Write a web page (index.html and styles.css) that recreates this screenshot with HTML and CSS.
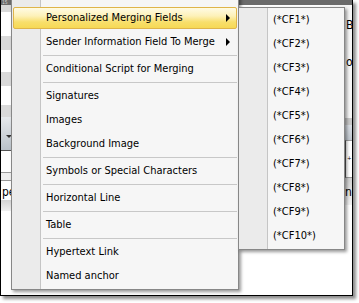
FILE: index.html
```html
<!DOCTYPE html>
<html>
<head>
<meta charset="utf-8">
<link rel="stylesheet" href="styles.css">
</head>
<body>
<div class="frame">
  <div class="bg">
    <div class="strip strip-left">
      <div class="r dark"><span class="num">15</span></div>
      <div class="r g h7"></div>
      <div class="r w h24"></div>
      <div class="r g h14"></div>
      <div class="r w h22"></div>
      <div class="r g h14"></div>
      <div class="r w h19"></div>
      <div class="r g h12"></div>
      <div class="r combo"><span class="caret"></span></div>
      <div class="r line-dark"></div>
      <div class="r w h21"></div>
      <div class="r line-mid"></div>
      <div class="r lg h7"></div>
      <div class="r line-mid"></div>
      <div class="r w h19 txt">pe</div>
      <div class="r fade h11"></div>
      <div class="r w fill"></div>
    </div>
    <div class="mid"></div>
    <div class="strip strip-right">
      <div class="r dark"></div>
      <div class="r w2 h113 rtxt"><span class="l1">B</span><span class="l2">o</span></div>
      <div class="r g2 h7"></div>
      <div class="r combo2 h15"></div>
      <div class="r box"><span>+</span></div>
      <div class="r fade2 h27 rtxt2">n</div>
      <div class="r w fill"></div>
    </div>
  </div>

  <div class="menu main">
    <div class="item active"><span>Personalized Merging Fields</span><i class="arrow"></i></div>
    <div class="item"><span>Sender Information Field To Merge</span><i class="arrow"></i></div>
    <div class="sep"></div>
    <div class="item"><span>Conditional Script for Merging</span></div>
    <div class="sep"></div>
    <div class="item"><span>Signatures</span></div>
    <div class="item"><span>Images</span></div>
    <div class="item"><span>Background Image</span></div>
    <div class="sep"></div>
    <div class="item"><span>Symbols or Special Characters</span></div>
    <div class="sep"></div>
    <div class="item"><span>Horizontal Line</span></div>
    <div class="sep"></div>
    <div class="item"><span>Table</span></div>
    <div class="sep"></div>
    <div class="item"><span>Hypertext Link</span></div>
    <div class="item"><span>Named anchor</span></div>
  </div>

  <div class="menu sub">
    <div class="item"><span>(*CF1*)</span></div>
    <div class="item"><span>(*CF2*)</span></div>
    <div class="item"><span>(*CF3*)</span></div>
    <div class="item"><span>(*CF4*)</span></div>
    <div class="item"><span>(*CF5*)</span></div>
    <div class="item"><span>(*CF6*)</span></div>
    <div class="item"><span>(*CF7*)</span></div>
    <div class="item"><span>(*CF8*)</span></div>
    <div class="item"><span>(*CF9*)</span></div>
    <div class="item"><span>(*CF10*)</span></div>
  </div>
</div>
</body>
</html>
```
FILE: styles.css
```css
html, body {
  margin: 0;
  padding: 0;
  background: #ffffff;
}
body {
  width: 359px;
  height: 303px;
  overflow: hidden;
  font-family: "DejaVu Sans Condensed", "DejaVu Sans", sans-serif;
  font-size: 11px;
  color: #000;
}
.frame {
  position: relative;
  box-sizing: border-box;
  width: 353px;
  height: 296px;
  border-left: 1px solid #000;
  border-right: 1px solid #000;
  border-bottom: 1px solid #000;
  box-shadow: 3px 3px 3px rgba(0, 0, 0, 0.45);
  overflow: hidden;
  background: #fff;
}
.bg {
  display: flex;
  height: 100%;
}
.strip {
  display: flex;
  flex-direction: column;
  width: 22px;
}
.mid {
  flex: 1;
  display: flex;
  flex-direction: column;
  background: linear-gradient(#6b6b6b 0 5px, #fff 5px);
}
.r { flex: none; position: relative; overflow: hidden; }
.dark { height: 5px; background: #6b6b6b; }
.num {
  display: block;
  font-size: 5px;
  line-height: 5px;
  color: #d8d8d8;
  padding-left: 1px;
}
.g { background: #d9d9d9; }
.g2 { background: #c8c8c8; }
.lg { background: #eeeeee; }
.w { background: #ffffff; }
.w2 { background: #f6f6f6; }
.h7 { height: 7px; }
.h11 { height: 11px; }
.h12 { height: 12px; }
.h14 { height: 14px; }
.h15 { height: 15px; }
.h19 { height: 19px; }
.h21 { height: 21px; }
.h22 { height: 22px; }
.h24 { height: 24px; }
.h27 { height: 27px; }
.h113 { height: 113px; }
.fill { flex: 1; }
.combo {
  height: 33px;
  background: linear-gradient(#e6e9ec, #b9c1c9);
  display: flex;
  align-items: center;
  padding-left: 5px;
  padding-top: 6px;
  box-sizing: border-box;
}
.caret {
  width: 0;
  height: 0;
  border-left: 3px solid transparent;
  border-right: 3px solid transparent;
  border-top: 3px solid #333;
}
.line-dark { height: 1px; background: #555; }
.line-mid { height: 1px; background: #999; }
.txt {
  font-family: "DejaVu Sans Condensed", sans-serif;
  font-size: 12px;
  line-height: 22px;
  padding-left: 1px;
}
.fade { background: linear-gradient(#d4d4d4, #f0f0f0); }
.rtxt {
  display: flex;
  flex-direction: column;
  padding-left: 16px;
  font-size: 12px;
  line-height: 14px;
}
.rtxt .l1 { margin-top: 13px; }
.rtxt .l2 { margin-top: 23px; }
.combo2 { background: linear-gradient(#d8dde3, #bfc6ce); }
.box {
  height: 38px;
  background: #fff;
  border-left: 1px solid #555;
  border-top: 1px solid #999;
  border-bottom: 1px solid #999;
  box-sizing: border-box;
  margin-left: 15px;
  padding-left: 1px;
  font-size: 6px;
  line-height: 34px;
}
.fade2 {
  background: linear-gradient(#d0d0d0, #f2f2f2);
  padding-left: 15px;
  font-size: 12px;
  line-height: 28px;
}

/* menus */
.menu {
  position: absolute;
  box-sizing: border-box;
  border: 1px solid #878787;
  background: linear-gradient(to right, #ebebeb 0 28px, #c5c5c5 28px 29px, #f6f6f6 29px);
  box-shadow: 2px 2px 3px rgba(0, 0, 0, 0.4);
  display: flex;
  flex-direction: column;
}
.main {
  left: 10px;
  top: -10px;
  width: 228px;
  padding: 15px 0 1px 0;
}
.sub {
  left: 237px;
  top: 7px;
  width: 107px;
  padding: 0 0 1px 0;
}
.item {
  position: relative;
  height: 24px;
  line-height: 24px;
  padding-left: 34px;
  padding-right: 8px;
  display: flex;
  align-items: center;
  justify-content: space-between;
  white-space: nowrap;
}
.item span { position: relative; }
.item.active::before {
  content: "";
  position: absolute;
  left: 1px;
  right: 1px;
  top: 1px;
  bottom: 1px;
  border: 1px solid #dfb54a;
  border-radius: 2px;
  background: linear-gradient(#fffbe4 0%, #fdf1b8 40%, #f8df6c 70%, #f6d955 100%);
}
.arrow {
  position: relative;
  width: 0;
  height: 0;
  border-top: 4px solid transparent;
  border-bottom: 4px solid transparent;
  border-left: 4px solid #000;
}
.sep {
  height: 1px;
  margin: 1px 1px 1px 31px;
  background: #c8c8c8;
}
```
